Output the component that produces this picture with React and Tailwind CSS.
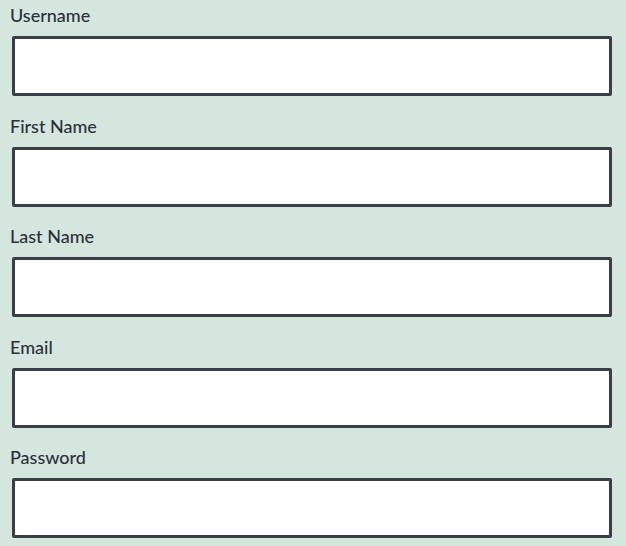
import React from 'react';

const fields = ['Username', 'First Name', 'Last Name', 'Email', 'Password'];

export default function App() {
  return (
    <div className="min-h-[546px] w-[626px] bg-[#d5e6de] px-[10px] pt-[3px] font-['Lato',sans-serif]">
      {fields.map((f) => (
        <div key={f} className="mb-[17.5px] flex flex-col">
          <label className="text-[18px] font-medium leading-[24px] text-[#2b303a]">{f}</label>
          <input
            type={f === 'Password' ? 'password' : 'text'}
            className="mt-[9px] ml-[2px] h-[60px] w-[600px] rounded-[2px] border-[3px] border-[#3a3e46] bg-white outline-none"
          />
        </div>
      ))}
    </div>
  );
}
